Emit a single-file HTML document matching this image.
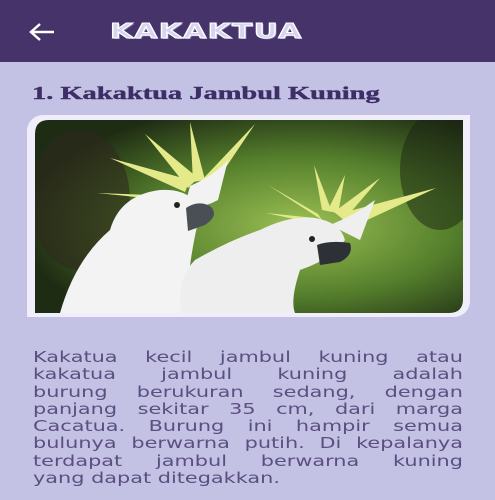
<!DOCTYPE html>
<html><head><meta charset="utf-8"><style>
html,body{margin:0;padding:0}
body{width:495px;height:500px;background:#c4c2e4;position:relative;overflow:hidden;font-family:"DejaVu Sans",sans-serif}
.hdr{position:absolute;left:0;top:0;width:495px;height:62px;background:#45336a}
.ttl{position:absolute;left:110px;top:19px;font:bold 20px "DejaVu Sans",sans-serif;letter-spacing:1px;color:#d8d4f0;-webkit-text-stroke:1px #fff;text-shadow:1px 1px 0 #8a80b8;transform:scaleX(1.48);transform-origin:left top;white-space:nowrap}
h1{position:absolute;left:32px;top:83px;margin:0;font:900 18px "Liberation Serif",serif;color:#3d2f66;white-space:nowrap;transform:scaleX(1.58);transform-origin:left top;-webkit-text-stroke:0.4px #3d2f66}
.frame{position:absolute;left:27px;top:115px;width:443px;height:202px;background:#f0eefa;border-radius:16px 0 16px 0}
.p{position:absolute;left:33px;top:349px;width:310px;font-size:15px;line-height:17.3px;color:#5a4f80;transform:scaleX(1.387);transform-origin:left top}
.p div{white-space:nowrap;text-align:justify;text-align-last:justify}
.p div.l{text-align-last:left}
</style></head><body>
<div class="hdr">
<svg style="position:absolute;left:28px;top:22px" width="28" height="20" viewBox="0 0 28 20"><path d="M26 10H4M12 2L3 10L12 18" stroke="#fff" stroke-width="2.5" fill="none"/></svg>
<div class="ttl">KAKAKTUA</div>
</div>
<h1>1. Kakaktua Jambul Kuning</h1>
<div class="frame"></div>
<svg style="position:absolute;left:0;top:0" width="495" height="500">
<defs>
<clipPath id="c"><path d="M49 120H463V299Q463 313 449 313H35V134Q35 120 49 120Z"/></clipPath>
<radialGradient id="g1" cx="0.62" cy="0.55" r="0.65"><stop offset="0" stop-color="#9cc054"/><stop offset="0.55" stop-color="#557f2c"/><stop offset="1" stop-color="#1f2c14"/></radialGradient>
</defs>
<g clip-path="url(#c)">
<rect x="35" y="120" width="428" height="193" fill="url(#g1)"/>
<ellipse cx="80" cy="200" rx="50" ry="70" fill="#2e2a1c" opacity="0.6"/>
<ellipse cx="440" cy="170" rx="40" ry="60" fill="#1a2412" opacity="0.5"/>
<g fill="#e4e98a">
<path d="M185 192L110 158L190 180Z"/><path d="M188 188L145 134L198 178Z"/><path d="M193 182L190 122L205 180Z"/><path d="M200 182L255 124L212 188Z"/><path d="M180 196L97 193L185 202Z"/>
<path d="M315 218L266 213L318 224Z"/><path d="M318 214L268 185L322 220Z"/><path d="M322 210L314 165L332 212Z"/><path d="M328 210L345 175L338 214Z"/><path d="M334 212L380 178L344 220Z"/><path d="M338 214L436 188L350 228Z"/>
</g>
<path d="M190 186Q215 175 228 160L218 200Q200 210 185 205Z" fill="#f2f2f2"/>
<path d="M60 313Q75 260 110 230Q120 195 160 190Q195 188 200 215Q190 250 185 313Z" fill="#f3f3f4"/>
<path d="M182 313Q175 280 195 260Q230 240 260 230Q290 215 315 218Q340 222 345 240Q330 260 300 270Q290 300 295 313Z" fill="#eeeeef"/>
<path d="M330 225Q355 215 375 200L360 240Z" fill="#efefef"/>
<circle cx="177" cy="205" r="3" fill="#222"/>
<circle cx="312" cy="239" r="3" fill="#222"/>
<path d="M186 208Q198 200 210 206Q220 215 205 225L188 231Z" fill="#4a4f55"/>
<path d="M317 245Q330 240 350 243Q354 255 340 262L320 265Z" fill="#2d3035"/>
</g>
</svg>
<div class="p">
<div>Kakatua kecil jambul kuning atau</div>
<div>kakatua jambul kuning adalah</div>
<div>burung berukuran sedang, dengan</div>
<div>panjang sekitar 35 cm, dari marga</div>
<div>Cacatua. Burung ini hampir semua</div>
<div>bulunya berwarna putih. Di kepalanya</div>
<div>terdapat jambul berwarna kuning</div>
<div class="l">yang dapat ditegakkan.</div>
</div>
</body></html>
